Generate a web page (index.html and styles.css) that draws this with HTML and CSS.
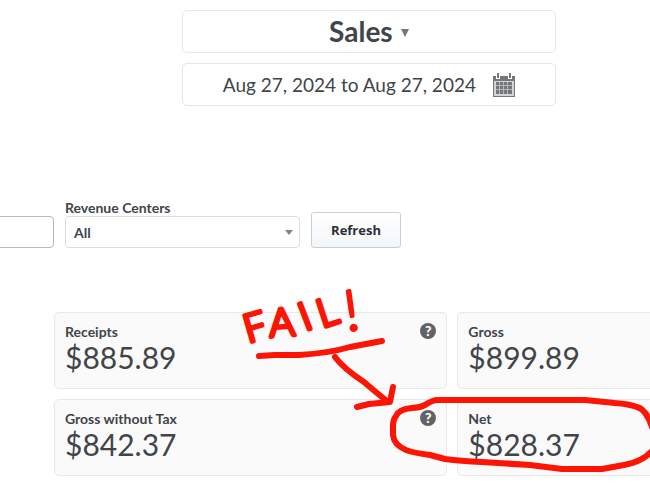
FILE: index.html
```html
<!DOCTYPE html>
<html lang="en">
<head>
<meta charset="utf-8">
<title>Sales</title>
<link rel="stylesheet" href="styles.css">
</head>
<body>
<main class="page">
  <header class="report-head">
    <button class="head-box report-name" type="button">Sales
      <svg class="caret" width="8" height="8" viewBox="0 0 8 8" aria-hidden="true"><path d="M0 0h8L4 8z"/></svg>
    </button>
    <button class="head-box report-range" type="button">Aug 27, 2024 to Aug 27, 2024
      <svg width="22" height="24" viewBox="0 0 22 24" aria-hidden="true">
        <path fill="#747678" d="M0 3h22v21H0z"/>
        <path fill="#fff" d="M3 2h4v4H3zM15 2h4v4h-4z"/>
        <path fill="#747678" d="M4 0h2v5H4zM16 0h2v5h-2z"/>
        <path fill="#d4d5d6" d="M1 8h20v15H1z"/>
        <path fill="#747678" d="M3 9h16v12H3z"/>
        <path stroke="#b4b6b8" d="M6.500 9v12M10.500 9v12M14.500 9v12M3 12.500h16M3 16.500h16"/>
      </svg>
    </button>
  </header>

  <form class="filters">
    <input class="field previous" type="text" aria-label="Filter">
    <div class="centers">
      <label for="centers">Revenue Centers</label>
      <div class="select-wrap">
        <select class="field" id="centers"><option>All</option></select>
        <svg class="arrow" width="8" height="5" viewBox="0 0 8 5" aria-hidden="true"><path d="M0 0h8L4 5z"/></svg>
      </div>
    </div>
    <button class="refresh" type="button">Refresh</button>
  </form>

  <section class="totals">
    <article class="card">
      <h2>Receipts</h2><p>$885.89</p>
      <button class="help" type="button" aria-label="About receipts">?</button>
    </article>
    <article class="card"><h2>Gross</h2><p>$899.89</p></article>
    <article class="card">
      <h2>Gross without Tax</h2><p>$842.37</p>
      <button class="help" type="button" aria-label="About gross without tax">?</button>
    </article>
    <article class="card"><h2>Net</h2><p>$828.37</p></article>

    <svg class="markup" width="600" height="200" viewBox="54 283 600 200">
      <text class="scrawl" x="248 270 305 322" y="343 337 331 328" rotate="-16 -4 -21 -18">FAIL<tspan class="bang" x="347" y="331" rotate="-8">!</tspan></text>
      <g class="pen">
        <path d="M259 356L275 355H299Q330 353 350 347L382 341"/>
        <path d="M335 357Q344 369 364 382L377 393L388 402M357 407L369 404L390 402L393 387"/>
        <path d="M652 427Q646 409 637 407Q629 404 615 403L585 400H438Q432 400 425 405Q419 408 412 408Q399 409 396 416Q393 420 393 425V435Q394 445 406 450Q414 453 430 455L445 459Q460 461 482 462L530 465L562 469H602L624 465Q642 462 652 451"/>
      </g>
    </svg>
  </section>
</main>
</body>
</html>
```
FILE: styles.css
```css
* { box-sizing: border-box; }

body {
  margin: 0;
  background: #fff;
  color: #414549;
  font-family: Lato, "Liberation Sans", sans-serif;
}

button, input, select { font: inherit; color: inherit; }

.page { padding-top: 10px; overflow: hidden; }

.report-head {
  display: flex;
  flex-direction: column;
  gap: 10px;
  width: 57.500%;
  margin-left: 28%;
}

.head-box {
  display: flex;
  align-items: center;
  justify-content: center;
  height: 43px;
  padding: 0;
  background: #fff;
  border: 1px solid #e6e7e8;
  border-radius: 5px;
}

.report-name { gap: 8px; padding-bottom: 2px; font-size: 28px; font-weight: 700; }
.caret { fill: #74787d; margin-top: 4px; }
.report-range { gap: 17px; font-size: 19px; }

.filters {
  display: flex;
  align-items: flex-end;
  gap: 11px;
  margin-top: 94px;
  font-size: 14px;
  font-weight: 700;
}

.field {
  display: block;
  height: 32px;
  padding: 0 8px;
  background: #fff;
  border: 1px solid #dcdddf;
  border-radius: 4px;
}

.previous {
  width: 64px;
  margin-left: -10px;
  border-color: #b5b7ba;
}

.centers { width: 235px; }
.centers label { display: block; line-height: 16px; }
.select-wrap { position: relative; }
.select-wrap .field { width: 100%; appearance: none; }

.arrow {
  position: absolute;
  top: 14px;
  right: 7px;
  fill: #808388;
  pointer-events: none;
}

.refresh {
  width: 90px;
  height: 36px;
  padding: 0;
  background: linear-gradient(#fff, #f3f6f9);
  border: 1px solid #c8cfd6;
  border-radius: 3px;
  color: #2c3035;
  font-family: "Open Sans", sans-serif;
  font-size: 13px;
  font-weight: 700;
}

.totals {
  position: relative;
  display: grid;
  grid-template-columns: 66% 66%;
  gap: 10px;
  margin: 64px 0 8px 54px;
}

.card {
  position: relative;
  min-height: 77px;
  padding: 11px 10px;
  background: #fafafa;
  border: 1px solid #e8e9ea;
  border-radius: 5px;
}

.card h2 { margin: 0; font-size: 14px; line-height: 16px; }
.card p { margin: 0; font-size: 30px; line-height: 34px; }

.help {
  position: absolute;
  top: 10px;
  right: 10px;
  width: 16px;
  height: 16px;
  padding: 0;
  background: #626366;
  border: 0;
  border-radius: 50%;
  color: #fff;
  font-size: 14px;
  font-weight: 900;
  line-height: 16px;
}

.markup {
  position: absolute;
  top: -29px;
  left: 0;
  overflow: visible;
  pointer-events: none;
}

.pen {
  fill: none;
  stroke: #fc1404;
  stroke-width: 6px;
  stroke-linecap: round;
  stroke-linejoin: round;
}

.scrawl {
  fill: #fc1404;
  stroke: #fc1404;
  stroke-width: 4px;
  stroke-linejoin: round;
  font-size: 39px;
  font-weight: 300;
}

.bang { font-size: 56px; stroke-width: 3px; }
```
